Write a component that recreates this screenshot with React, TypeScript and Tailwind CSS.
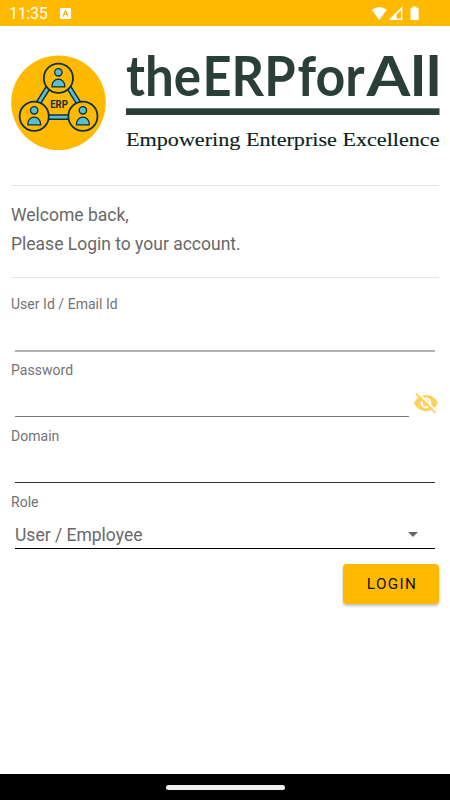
import React from 'react';
import { clsx } from 'clsx';

const StatusBar: React.FC = () => (
  <header className="flex h-[26px] shrink-0 items-center bg-[#ffb900] pl-[9px] pr-[30px] text-white">
    <span className="pt-[2px] text-[16px] leading-6 tracking-[-0.3px]">11:35</span>
    <svg className="ml-[13px] h-[11px] w-[11px]" viewBox="0 0 11 11">
      <rect width="11" height="11" rx="1" fill="#fff" />
      <path d="M3 8.4 5.5 2.5 8 8.4M4 6.5h3" fill="none" stroke="#ffb900" strokeWidth="1.2" />
    </svg>
    <svg className="ml-auto h-[15px] w-[49px]" viewBox="0 0 49 15">
      <path d="M0.8 3.7Q8.3 -1.8 15.8 3.7L8.3 14z" fill="#fff" />
      <path d="M17.6 14 31.4 0.2V14z" fill="#fff" />
      <path d="M25.6 8.6 30 4.2V12.4h-4.4z" fill="#ffb900" />
      <path d="M39.5 1.8h2.3V0.4h3.6v1.4h2.3v12.2h-8.2z" fill="#fff" />
    </svg>
  </header>
);

const Person: React.FC<{ x: number; y: number }> = ({ x, y }) => (
  <g transform={`translate(${x} ${y})`} stroke="#102f3c">
    <circle r="14.6" fill="#ffb900" strokeWidth="1.8" />
    <circle cy="-6" r="3.7" fill="#5bbfce" strokeWidth="1.3" />
    <path d="M-6.4 8.6V7.6a6.4 6.8 0 0 1 12.8 0V8.6z" fill="#5bbfce" strokeWidth="1.3" />
  </g>
);

const ErpLogo: React.FC = () => (
  <svg className="h-24 w-24 shrink-0" viewBox="0 0 96 96">
    <circle cx="47.5" cy="47.7" r="47.3" fill="#ffb900" />
    <path d="M47.5 16 18.5 62.2h58z" fill="none" stroke="#102f3c" strokeWidth="5.8" />
    <path d="M47.5 16 18.5 62.2h58z" fill="none" stroke="#5bbfce" strokeWidth="2.8" />
    <Person x={47.4} y={23.3} />
    <Person x={23.2} y={61.3} />
    <Person x={71.9} y={61.3} />
    <text
      x="39.2"
      y="53.2"
      fontSize="10"
      fontWeight="700"
      fontFamily="Roboto, sans-serif"
      textLength="17.6"
      lengthAdjust="spacingAndGlyphs"
      fill="#16303a"
    >
      ERP
    </text>
  </svg>
);

// Each word of the name has its own width
const nameParts = [
  { text: 'the', x: 0, width: 75 },
  { text: 'ERP', x: 76.5, width: 93 },
  { text: 'for', x: 171.5, width: 67 },
  { text: 'All', x: 240.5, width: 75 },
];

const Wordmark: React.FC = () => (
  <svg className="ml-5 h-[106px] w-[314px] shrink-0 overflow-visible" viewBox="0 0 314 106">
    <g fontSize="56" fontWeight="700" fontFamily="Lato, sans-serif" fill="#2b3f3a">
      {nameParts.map(({ text, x, width }) => (
        <text key={text} x={x} y="42.5" textLength={width} lengthAdjust="spacingAndGlyphs">
          {text}
        </text>
      ))}
    </g>
    <rect y="55.3" width="313.5" height="6.7" fill="#2b3f3a" />
    <text
      x="0"
      y="92.5"
      fontSize="19.5"
      fontFamily="'Liberation Serif', serif"
      textLength="313.5"
      lengthAdjust="spacingAndGlyphs"
      fill="#0d1f1a"
      stroke="#0d1f1a"
      strokeWidth="0.15"
    >
      Empowering Enterprise Excellence
    </text>
  </svg>
);

const EyeOff: React.FC = () => (
  <svg className="h-[26px] w-[26px]" viewBox="0 0 24 24">
    <path
      d="M12 4.5C7 4.5 2.73 7.61 1 12c1.73 4.39 6 7.5 11 7.5s9.27-3.11 11-7.5c-1.73-4.39-6-7.5-11-7.5zM12 17a5 5 0 1 1 0-10 5 5 0 0 1 0 10zm0-8a3 3 0 1 0 0 6 3 3 0 0 0 0-6z"
      fill="#ffd15c"
    />
    <path d="M4.4 2.2 22.2 20" stroke="#fff" strokeWidth="1.6" />
    <path d="M2.7 3.3 20.7 21.3" stroke="#ffd15c" strokeWidth="1.8" />
  </svg>
);

interface FieldProps {
  label: string;
  line: string;
  children?: React.ReactNode;
  trailing?: React.ReactNode;
}

const Field: React.FC<FieldProps> = ({ label, line, children, trailing }) => (
  <div className="h-[66px]">
    <div className="h-5 text-[14px] leading-5 tracking-[0.03px] text-[#737373]">{label}</div>
    <div className="flex h-[38px] pl-1">
      <div className={clsx('flex flex-1 items-end', line, !trailing && 'mr-1')}>{children}</div>
      {trailing}
    </div>
  </div>
);

export default function App() {
  return (
    <div className="flex h-[800px] w-[450px] flex-col overflow-hidden bg-white font-['Roboto',sans-serif]">
      <StatusBar />

      <main className="flex-1 px-[11px]">
        <div className="flex h-[160px] items-start border-b border-[#e4e4e4]">
          <div className="pt-[29px]">
            <ErpLogo />
          </div>
          <div className="-ml-px pt-[27px]">
            <Wordmark />
          </div>
        </div>

        <div className="h-[92px] border-b border-[#e4e4e4] pt-[15px] text-[17.5px] leading-[29px] text-[#686868]">
          <p>Welcome back,</p>
          <p>Please Login to your account.</p>
        </div>

        <form className="pt-4">
          <Field label="User Id / Email Id" line="border-b-2 border-[#b0b0b0]" />
          <Field
            label="Password"
            line="mb-px border-b border-[#777]"
            trailing={
              <div className="ml-1 flex items-end pb-[2px]">
                <EyeOff />
              </div>
            }
          />
          <Field label="Domain" line="mb-px border-b border-[#333]" />
          <Field label="Role" line="mb-px border-b border-black">
            <span className="text-[17.5px] leading-[26px] text-[#686868]">User / Employee</span>
            <svg className="mb-[11px] ml-auto mr-[17px] h-[5px] w-[10px]" viewBox="0 0 10 5">
              <path d="M0 0h10L5 5z" fill="#666" />
            </svg>
          </Field>
          <div className="mt-[6px] flex justify-end">
            <button
              type="button"
              className="h-10 w-24 rounded-[4px] bg-[#ffb900] pl-[2px] text-[15.3px] leading-10 tracking-[1.3px] text-[#111] shadow-[0_2px_3px_rgba(0,0,0,0.25)]"
            >
              LOGIN
            </button>
          </div>
        </form>
      </main>

      <footer className="flex h-[26px] shrink-0 items-center justify-center bg-black">
        <div className="h-[5px] w-[119px] rounded-full bg-[#f0edf0]" />
      </footer>
    </div>
  );
}
